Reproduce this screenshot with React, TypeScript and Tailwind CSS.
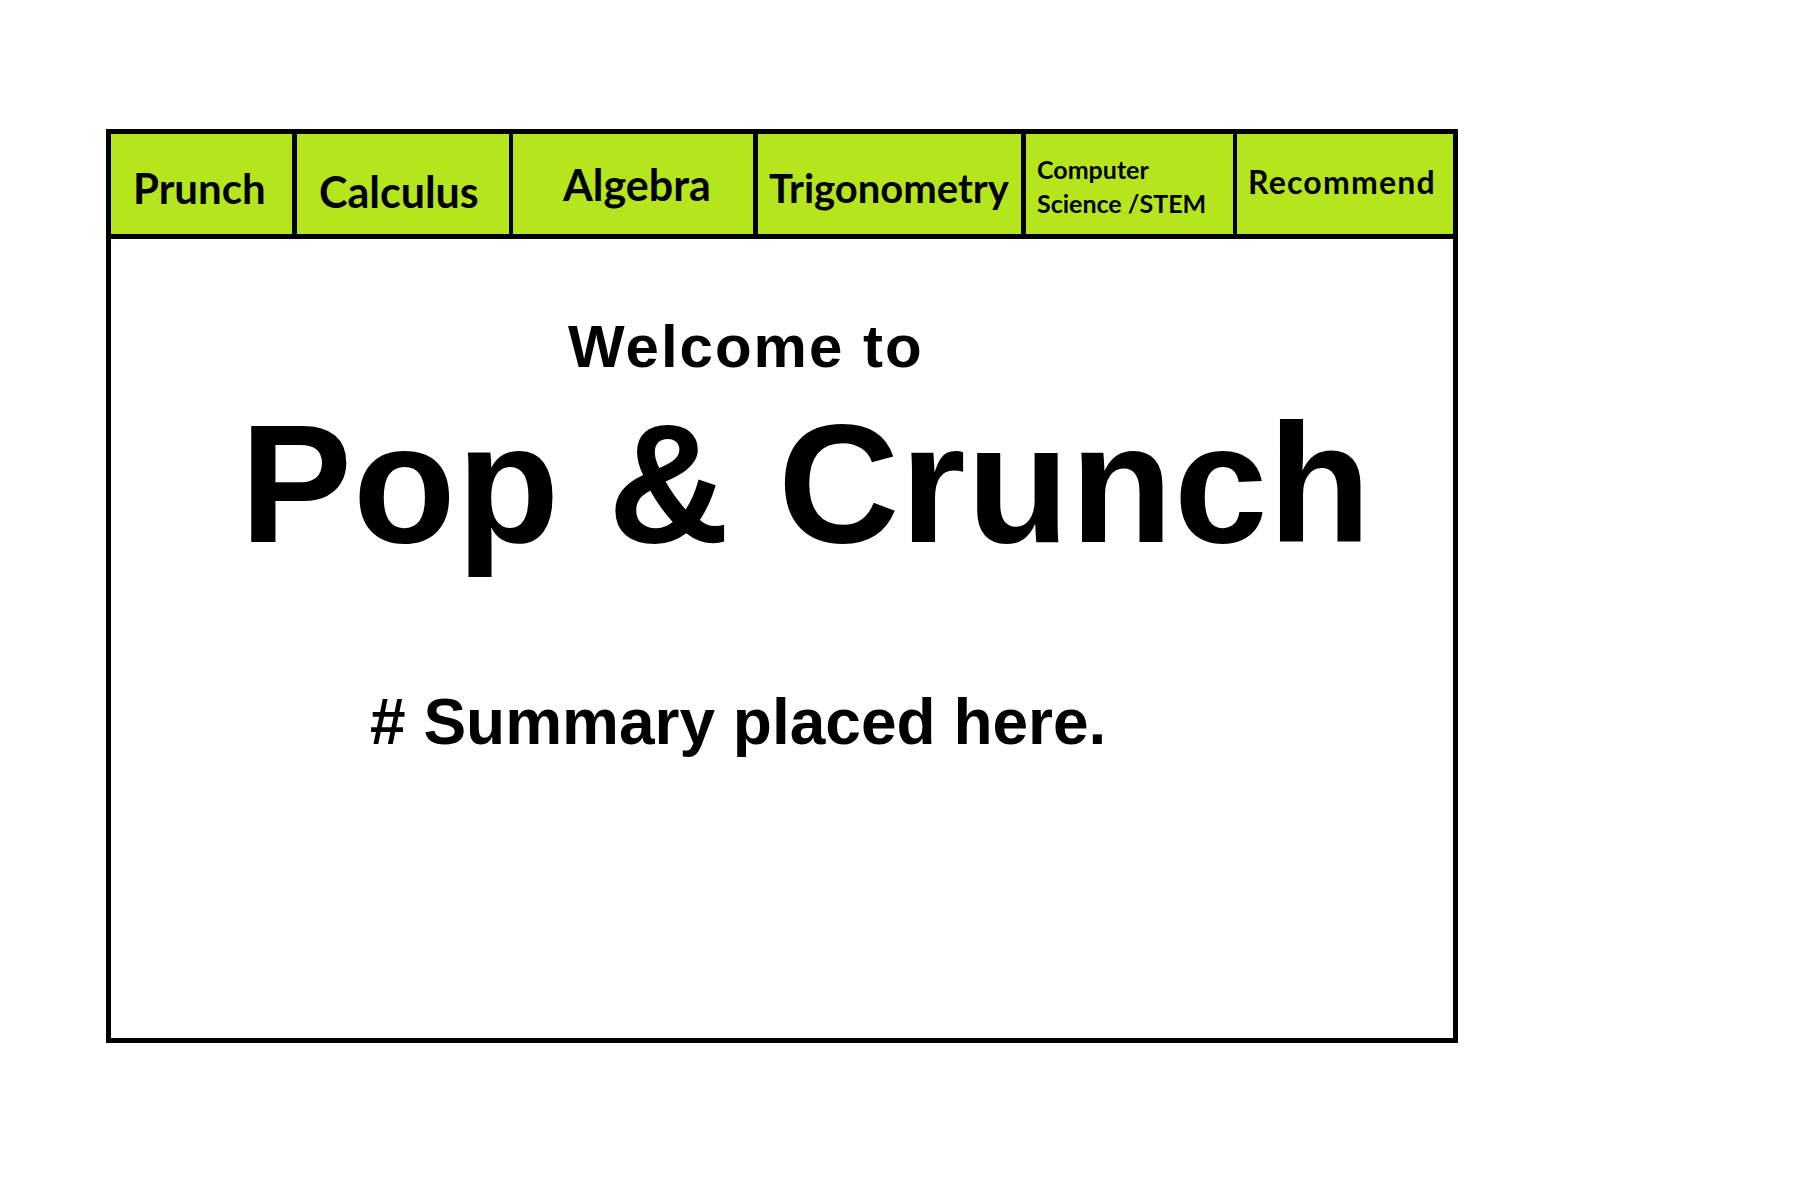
import React from "react";

const navFont = { fontFamily: "Lato, 'Open Sans', sans-serif" };

export default function App() {
  return (
    <div className="min-h-[1200px] w-[1800px] bg-white pt-[129px] pl-[106px]">
      <div className="flex h-[914px] w-[1352px] flex-col border-[5px] border-black">
        <nav
          className="flex h-[105px] border-b-[5px] border-black bg-[#b5e61d] text-black font-bold"
          style={navFont}
        >
          <div className="w-[181px] pl-[22px] pt-[33px] text-[42px] leading-none">Prunch</div>
          <div className="w-[217px] border-l-[5px] border-black pl-[22px] pt-[36px] text-[43px] leading-none">
            Calculus
          </div>
          <div className="w-[244px] border-l-[4px] border-black pl-[50px] pt-[29px] text-[43px] leading-none">
            Algebra
          </div>
          <div className="w-[268px] border-l-[5px] border-black pl-[11px] pt-[34px] text-[40px] leading-none">
            Trigonometry
          </div>
          <div className="flex w-[212px] flex-col border-l-[5px] border-black pl-[11px] pt-[18px] text-[25px] leading-[34px]">
            <span>Computer</span>
            <span>Science /STEM</span>
          </div>
          <div className="w-[220px] border-l-[4px] border-black pl-[11px] pt-[32px] text-[32px] leading-none tracking-[1.2px]">
            Recommend
          </div>
        </nav>
        <main
          className="flex flex-col font-bold text-black"
          style={{ fontFamily: "'Liberation Sans', Arial, sans-serif" }}
        >
          <h2 className="mt-[78px] pl-[457px] text-[60px] leading-none tracking-[2px]">Welcome to</h2>
          <h1 className="mt-[23px] pl-[129px] text-[168px] leading-none tracking-[1px]">Pop &amp; Crunch</h1>
          <p className="mt-[122px] pl-[259px] text-[64px] leading-none"># Summary placed here.</p>
        </main>
      </div>
    </div>
  );
}
